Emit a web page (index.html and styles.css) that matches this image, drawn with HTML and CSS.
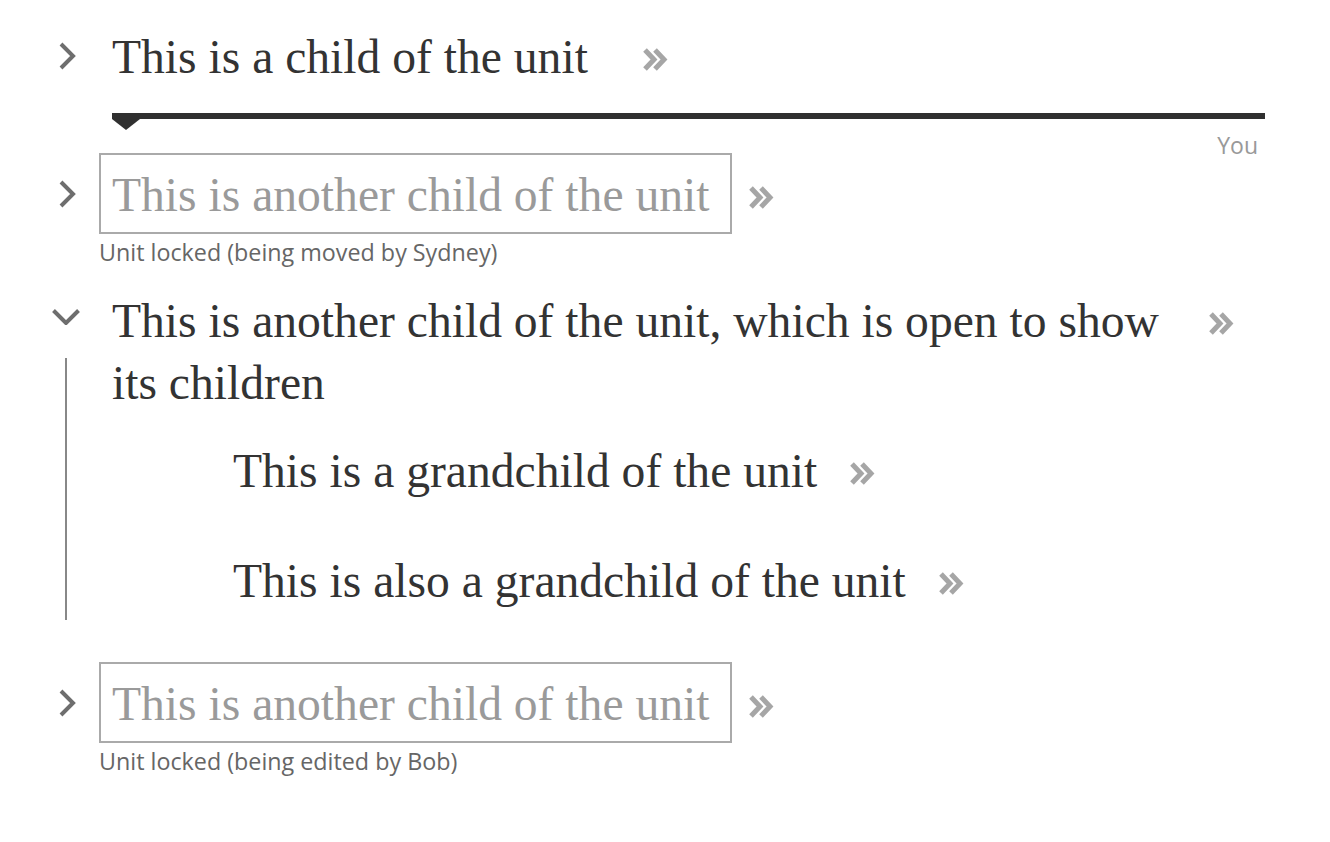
FILE: index.html
```html
<!DOCTYPE html>
<html lang="en">
<head>
<meta charset="utf-8">
<title>Units</title>
<link rel="stylesheet" href="styles.css">
</head>
<body>
<ul class="tree">
  <li class="node has-drop">
    <div class="toggle">
      <div class="toggle-head">
        <svg class="chev-right" width="18" height="30" viewBox="0 0 18 30"><polyline points="3,3 15,15 3,27"/></svg>
      </div>
    </div>
    <div class="content">
      <div class="unit-row">
        <div class="unit-text">This is a child of the unit</div>
        <svg class="more more-wide" width="26" height="26" viewBox="0 0 26 26"><polyline points="3,3 12,12.5 3,22"/><polyline points="13,3 22,12.5 13,22"/></svg>
      </div>
      <div class="drop">
        <div class="drop-bar"></div>
        <div class="drop-arrow"></div>
        <div class="drop-label">You</div>
      </div>
    </div>
  </li>
  <li class="node">
    <div class="toggle">
      <div class="toggle-head">
        <svg class="chev-right" width="18" height="30" viewBox="0 0 18 30"><polyline points="3,3 15,15 3,27"/></svg>
      </div>
    </div>
    <div class="content">
      <div class="unit-row">
        <div class="unit-text locked">This is another child of the unit</div>
        <svg class="more" width="26" height="26" viewBox="0 0 26 26"><polyline points="3,3 12,12.5 3,22"/><polyline points="13,3 22,12.5 13,22"/></svg>
      </div>
      <div class="lock-note">Unit locked (being moved by Sydney)</div>
    </div>
  </li>
  <li class="node open">
    <div class="toggle">
      <div class="toggle-head">
        <svg class="chev-down" width="30" height="17" viewBox="0 0 30 17"><polyline points="2.5,2.5 15,15 27.5,2.5"/></svg>
      </div>
      <div class="toggle-line"></div>
    </div>
    <div class="content">
      <div class="unit-row">
        <div class="unit-text">This is another child of the unit, which is open to show its children</div>
        <svg class="more" width="26" height="26" viewBox="0 0 26 26"><polyline points="3,3 12,12.5 3,22"/><polyline points="13,3 22,12.5 13,22"/></svg>
      </div>
      <ul class="children">
        <li class="node">
          <div class="toggle"></div>
          <div class="content">
            <div class="unit-row">
              <div class="unit-text">This is a grandchild of the unit</div>
              <svg class="more" width="26" height="26" viewBox="0 0 26 26"><polyline points="3,3 12,12.5 3,22"/><polyline points="13,3 22,12.5 13,22"/></svg>
            </div>
          </div>
        </li>
        <li class="node">
          <div class="toggle"></div>
          <div class="content">
            <div class="unit-row">
              <div class="unit-text">This is also a grandchild of the unit</div>
              <svg class="more" width="26" height="26" viewBox="0 0 26 26"><polyline points="3,3 12,12.5 3,22"/><polyline points="13,3 22,12.5 13,22"/></svg>
            </div>
          </div>
        </li>
      </ul>
    </div>
  </li>
  <li class="node">
    <div class="toggle">
      <div class="toggle-head">
        <svg class="chev-right" width="18" height="30" viewBox="0 0 18 30"><polyline points="3,3 15,15 3,27"/></svg>
      </div>
    </div>
    <div class="content">
      <div class="unit-row">
        <div class="unit-text locked">This is another child of the unit</div>
        <svg class="more" width="26" height="26" viewBox="0 0 26 26"><polyline points="3,3 12,12.5 3,22"/><polyline points="13,3 22,12.5 13,22"/></svg>
      </div>
      <div class="lock-note">Unit locked (being edited by Bob)</div>
    </div>
  </li>
</ul>
</body>
</html>
```

FILE: styles.css
```css
html, body {
  margin: 0;
  padding: 0;
  background: #ffffff;
}

body {
  font-family: "Liberation Serif", "Times New Roman", serif;
  color: #333333;
}

.tree,
.children {
  list-style: none;
  margin: 0;
}

.tree {
  padding: 15px 65px 0 42px;
}

.node {
  display: grid;
  grid-template-columns: 48px 1fr;
  column-gap: 9px;
  margin-bottom: 11px;
}

.node.has-drop {
  margin-bottom: 34px;
}

.node.open {
  margin-bottom: 42px;
}

.children {
  margin-top: 7px;
  padding: 0 0 0 64px;
}

.children .node {
  margin-bottom: 29px;
}

.children .node:last-child {
  margin-bottom: 0;
}

.toggle {
  display: flex;
  flex-direction: column;
  align-items: center;
}

.toggle-head {
  height: 62px;
  padding-top: 11px;
  display: flex;
  align-items: center;
  justify-content: center;
}

.toggle-line {
  flex: 1;
  width: 2px;
  margin-top: 6px;
  background: #888888;
}

.chev-right,
.chev-down {
  display: block;
  fill: none;
  stroke: #6e6e6e;
  stroke-width: 4;
  stroke-linecap: butt;
  stroke-linejoin: miter;
}

.chev-right {
  margin-left: 2px;
  margin-bottom: 2px;
}

.chev-down {
  margin-bottom: 9px;
}

.content {
  min-width: 0;
}

.unit-row {
  display: flex;
  align-items: flex-start;
  max-width: 1135px;
}

.unit-text {
  border: 2px solid transparent;
  padding: 9px 14px 6px 11px;
  font-size: 47.6px;
  line-height: 62px;
  color: #333333;
}

.unit-text.locked {
  border-color: #aaaaaa;
  padding-right: 21px;
  color: #9a9a9a;
}

.more {
  flex: none;
  display: block;
  margin-top: 32px;
  margin-left: 16px;
  fill: none;
  stroke: #a6a6a6;
  stroke-width: 5;
  stroke-linecap: butt;
  stroke-linejoin: miter;
}

.more.more-wide {
  margin-left: 38px;
}

.lock-note {
  margin-top: 3px;
  font-family: "Open Sans", "Noto Sans", sans-serif;
  font-size: 23.3px;
  line-height: 31px;
  color: #666666;
}

.drop {
  position: relative;
  margin-top: 17px;
  margin-left: 13px;
}

.drop-bar {
  height: 6px;
  background: #303030;
}

.drop-arrow {
  position: absolute;
  left: 0;
  top: 6px;
  width: 0;
  height: 0;
  border-left: 14.5px solid transparent;
  border-right: 14.5px solid transparent;
  border-top: 11px solid #303030;
}

.drop-label {
  position: absolute;
  right: 7px;
  top: 17px;
  font-family: "Open Sans", "Noto Sans", sans-serif;
  font-size: 23px;
  line-height: 31px;
  color: #999999;
}
```
